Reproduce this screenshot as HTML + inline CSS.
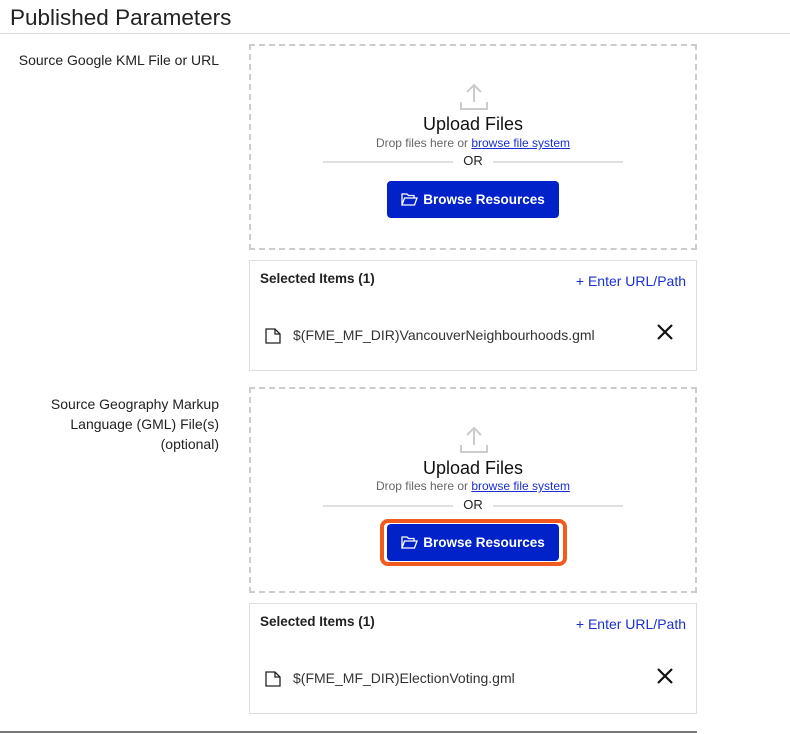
<!DOCTYPE html>
<html><head><style>
*{box-sizing:border-box;margin:0;padding:0}
body{width:790px;height:734px;background:#fff;font-family:"Liberation Sans",sans-serif;color:#222;position:relative;overflow:hidden}
.abs{position:absolute}
h1{position:absolute;left:10px;top:5px;font-size:22.5px;font-weight:normal;color:#222}
.hr{position:absolute;left:0;top:33px;width:790px;height:1px;background:#ddd}
.lbl{position:absolute;right:571px;text-align:right;font-size:14px;line-height:20px;color:#222}
.drop{position:absolute;left:249px;width:448px;height:206px;border:2px dashed #ccc}
.sel{position:absolute;left:249px;width:448px;height:111px;border:1px solid #ddd}
.up{position:absolute;left:0;width:100%;text-align:center}
.btn{position:absolute;left:136px;width:172px;height:37px;background:#0022c8;border-radius:4px;color:#fff;font-size:13.5px;font-weight:bold;display:flex;align-items:center;justify-content:center;gap:5px}
.line{position:absolute;height:2px;background:#e0e0e0}
</style></head><body>
<h1>Published Parameters</h1>
<div class="hr"></div>

<div class="lbl" style="top:50px">Source Google KML File or URL</div>
<div class="lbl" style="top:394px">Source Geography Markup<br>Language (GML) File(s)<br>(optional)</div>

<div class="drop" style="top:44px">
 <svg class="abs" style="left:208px;top:36px" width="30" height="30" viewBox="0 0 30 30" fill="none" stroke="#ccc" stroke-width="2"><path d="M15 3V20M8 10L15 3L22 10M2 20V27H28V20"/></svg>
 <div class="up" style="top:68px;font-size:18px;color:#111">Upload Files</div>
 <div class="up" style="top:90px;font-size:12px;color:#666">Drop files here or <span style="color:#1a2fd0;text-decoration:underline">browse file system</span></div>
 <div class="line" style="left:72px;top:115px;width:130px"></div>
 <div class="line" style="left:242px;top:115px;width:130px"></div>
 <div class="up" style="top:107px;font-size:13px;color:#222">OR</div>
 <div class="btn" style="top:135px"><svg width="17" height="15" viewBox="0 0 17 15" fill="none" stroke="#fff" stroke-width="1.3"><path d="M1 13V2H6L7.5 3.5H13V6M1 13L3.5 6H16L13.5 13Z"/></svg>Browse Resources</div>
</div>
<div class="sel" style="top:260px">
 <div class="abs" style="left:10px;top:10px;font-size:13.5px;font-weight:bold;color:#222">Selected Items (1)</div>
 <div class="abs" style="right:10px;top:12px;font-size:14px;color:#1a2fd0">+ Enter URL/Path</div>
 <svg class="abs" style="left:14px;top:66px" width="18" height="18" viewBox="0 0 18 18" fill="none" stroke="#222" stroke-width="1.3"><path d="M2 2H11L16 7V16H2Z M11 2V7H16"/></svg>
 <div class="abs" style="left:43px;top:66px;font-size:14px;color:#333">$(FME_MF_DIR)VancouverNeighbourhoods.gml</div>
 <svg class="abs" style="left:407px;top:63px" width="16" height="16" viewBox="0 0 16 16" stroke="#111" stroke-width="2.2"><path d="M1 1L15 15M15 1L1 15"/></svg>
</div>

<div class="drop" style="top:387px">
 <svg class="abs" style="left:208px;top:36px" width="30" height="30" viewBox="0 0 30 30" fill="none" stroke="#ccc" stroke-width="2"><path d="M15 3V20M8 10L15 3L22 10M2 20V27H28V20"/></svg>
 <div class="up" style="top:69px;font-size:18px;color:#111">Upload Files</div>
 <div class="up" style="top:90px;font-size:12px;color:#666">Drop files here or <span style="color:#1a2fd0;text-decoration:underline">browse file system</span></div>
 <div class="line" style="left:72px;top:116px;width:130px"></div>
 <div class="line" style="left:242px;top:116px;width:130px"></div>
 <div class="up" style="top:108px;font-size:13px;color:#222">OR</div>
 <div class="abs" style="left:129px;top:130px;width:187px;height:47px;border:4px solid #f05a1e;border-radius:8px"></div>
 <div class="btn" style="top:135px"><svg width="17" height="15" viewBox="0 0 17 15" fill="none" stroke="#fff" stroke-width="1.3"><path d="M1 13V2H6L7.5 3.5H13V6M1 13L3.5 6H16L13.5 13Z"/></svg>Browse Resources</div>
</div>
<div class="sel" style="top:603px">
 <div class="abs" style="left:10px;top:10px;font-size:13.5px;font-weight:bold;color:#222">Selected Items (1)</div>
 <div class="abs" style="right:10px;top:12px;font-size:14px;color:#1a2fd0">+ Enter URL/Path</div>
 <svg class="abs" style="left:14px;top:66px" width="18" height="18" viewBox="0 0 18 18" fill="none" stroke="#222" stroke-width="1.3"><path d="M2 2H11L16 7V16H2Z M11 2V7H16"/></svg>
 <div class="abs" style="left:43px;top:66px;font-size:14px;color:#333">$(FME_MF_DIR)ElectionVoting.gml</div>
 <svg class="abs" style="left:407px;top:64px" width="16" height="16" viewBox="0 0 16 16" stroke="#111" stroke-width="2.2"><path d="M1 1L15 15M15 1L1 15"/></svg>
</div>
<div class="abs" style="left:0;top:731px;width:697px;height:2px;background:#777"></div>
</body></html>
